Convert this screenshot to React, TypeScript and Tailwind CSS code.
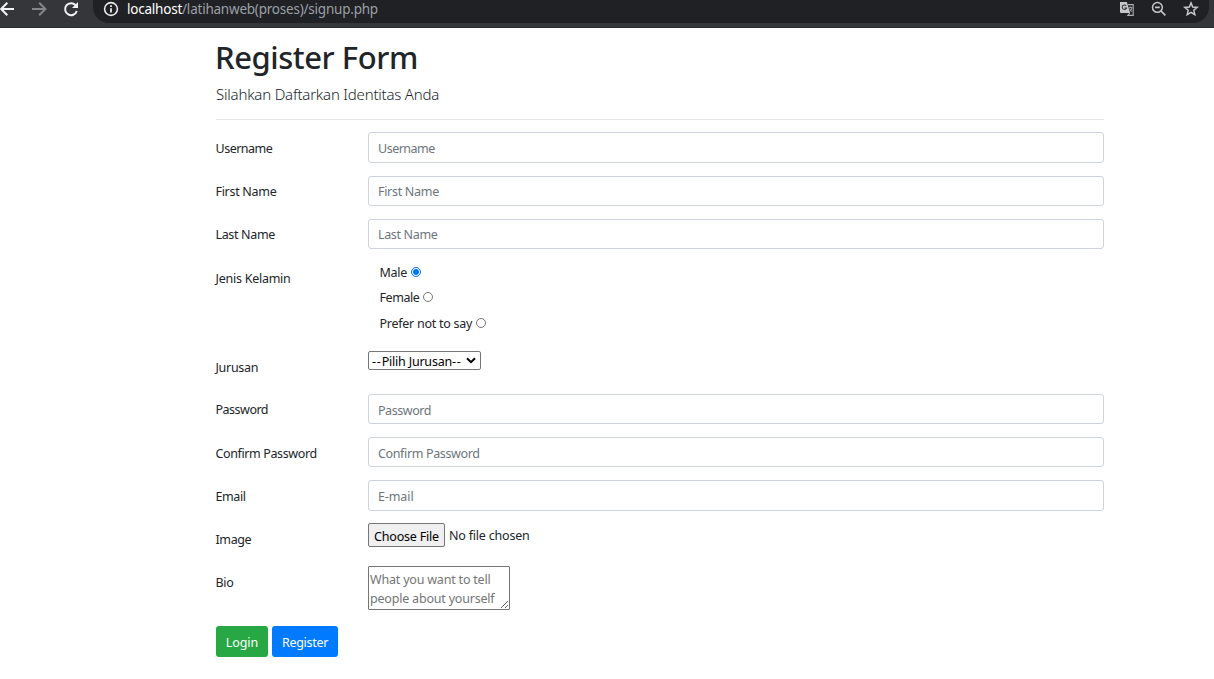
import React from "react";

const inputClass =
  "block w-full rounded-[3px] border border-[#ced4da] bg-white px-[9px] text-[12.5px] leading-[20px] text-[#495057] placeholder:text-[#6c757d] placeholder:opacity-100 outline-none";

type RowProps = {
  label: string;
  rowClass: string;
  labelClass: string;
  children: React.ReactNode;
};

function Row({ label, rowClass, labelClass, children }: RowProps) {
  return (
    <div className={`flex items-start ${rowClass}`}>
      <div className={`-ml-[0.5px] w-[152.5px] shrink-0 leading-[20px] whitespace-nowrap ${labelClass}`}>{label}</div>
      <div className="min-w-0 flex-1">{children}</div>
    </div>
  );
}

function BrowserBar() {
  return (
    <header className="flex h-[28px] items-start overflow-hidden border-b border-[#292a2d] bg-[#35363a] text-[#e8eaed]">
      <svg className="h-[18px] w-[93px] shrink-0" viewBox="0 0 93 18" fill="none" strokeWidth="2">
        <path d="M14 9H1.5M7.3 2.8 1.2 9l6.1 6.2" stroke="#f1f3f4" />
        <path d="M32 9h13M39.2 2.8 45.4 9l-6.2 6.2" stroke="#85868a" />
        <path d="M75.6 5.2A6 6 0 1 0 76.8 11" stroke="#f1f3f4" />
        <path d="M78 2v6h-6z" fill="#f1f3f4" />
      </svg>
      <div className="mr-[5px] flex h-[23px] flex-1 items-start rounded-b-[16px] bg-[#202124] pl-[10px]">
        <svg className="h-[18px] w-[16px] shrink-0" viewBox="0 0 16 18" fill="none">
          <circle cx="8" cy="9" r="6.4" stroke="#e8eaed" strokeWidth="1.6" />
          <path d="M8 8.2v4.3M8 5.3v1.6" stroke="#e8eaed" strokeWidth="1.8" />
        </svg>
        <div className="ml-[8px] text-[13.5px] leading-[18px] tracking-[-0.22px] whitespace-nowrap text-[#9aa0a6]">
          <span className="text-white">localhost</span>/latihanweb(proses)/signup.php
        </div>
        <svg className="ml-auto h-[18px] w-[90px] shrink-0" viewBox="0 0 90 18" fill="none">
          <path d="M1 2h6.8l3.4 11H2a1 1 0 0 1-1-1z" fill="#c4c6c9" />
          <path d="M8.6 4.6h5.6v10.8H8.8l2-2.4" stroke="#aeb1b5" strokeWidth="1.1" />
          <path d="M7.2 5.9A2.2 2.2 0 1 0 7.5 8H5.4" stroke="#36373a" strokeWidth="1.1" />
          <path d="M9.6 7.6h3.8M11.5 6.6v1M10.2 8.4l2.8 3.4M12.8 8c-.3 1.6-.9 2.7-1.9 3.6" stroke="#aeb1b5" strokeWidth=".9" />
          <circle cx="38.4" cy="7.4" r="4.9" stroke="#c4c6c9" strokeWidth="1.5" />
          <path d="M36 7.4h4.8M42 11l4.4 4.4" stroke="#c4c6c9" strokeWidth="1.7" />
          <path d="m72 2.9 1.7 4.1 4.5.4-3.4 2.9 1 4.4-3.8-2.3-3.8 2.3 1-4.4-3.4-2.9 4.5-.4z" stroke="#c4c6c9" strokeWidth="1.5" />
        </svg>
      </div>
    </header>
  );
}

export default function App() {
  return (
    <div className="h-[679px] overflow-hidden bg-white font-['Noto_Sans','Open_Sans',sans-serif] text-[12.5px] text-[#212529]">
      <BrowserBar />
      <main className="ml-[216px] w-[888px]">
        <h1 className="-ml-px pt-[10px] text-[31px] leading-[39px] font-medium tracking-[-0.45px] whitespace-nowrap">Register Form</h1>
        <p className="mt-[5px] text-[15px] leading-[24px] font-light tracking-[-0.2px] whitespace-nowrap">
          Silahkan Daftarkan Identitas Anda
        </p>
        <hr className="mt-[13px] mb-[12px] border-t border-[#e5e5e5]" />

        <form onSubmit={(e) => e.preventDefault()}>
          <Row label="Username" rowClass="h-[44px]" labelClass="pt-[7px] tracking-[-0.5px]">
            <input placeholder="Username" className={`h-[31px] pt-[2px] tracking-[-0.5px] ${inputClass}`} />
          </Row>
          <Row label="First Name" rowClass="h-[43px]" labelClass="pt-[6px] tracking-[-0.3px]">
            <input placeholder="First Name" className={`h-[30px] pt-0 tracking-[-0.3px] ${inputClass}`} />
          </Row>
          <Row label="Last Name" rowClass="h-[43px]" labelClass="pt-[6px] tracking-[-0.35px]">
            <input placeholder="Last Name" className={`h-[30px] pt-0 tracking-[-0.35px] ${inputClass}`} />
          </Row>

          <Row label="Jenis Kelamin" rowClass="h-[89px]" labelClass="pt-[7px] tracking-[-0.25px]">
            <div className="-mt-[2px] pl-[11.5px] leading-[20px]">
              <label className="flex h-[25px] items-center gap-[4px] tracking-[-0.3px] whitespace-nowrap">
                Male
                <input type="radio" name="gender" defaultChecked className="mt-[-2px] h-[10px] w-[10px]" />
              </label>
              <label className="flex h-[26px] items-center gap-[3.5px] tracking-[-0.45px] whitespace-nowrap">
                Female
                <input type="radio" name="gender" className="mt-[-2px] h-[10px] w-[10px]" />
              </label>
              <label className="flex h-[25px] items-center gap-[3.5px] tracking-[-0.26px] whitespace-nowrap">
                Prefer not to say
                <input type="radio" name="gender" className="mt-[-2px] h-[10px] w-[10px]" />
              </label>
            </div>
          </Row>

          <Row label="Jurusan" rowClass="h-[43px]" labelClass="pt-[7px] tracking-[-0.3px]">
            <button
              type="button"
              className="flex h-[19px] w-[113px] items-center justify-between rounded-[2px] border border-[#767676] bg-white pr-[4px] pl-[3px] leading-[17px] whitespace-nowrap text-black"
            >
              <span className="pt-[2px]">
                <span className="tracking-[0.8px]">--</span>
                <span className="tracking-[-0.2px]">Pilih Jurusan</span>
                <span className="tracking-[0.8px]">--</span>
              </span>
              <svg className="h-[7px] w-[10px] shrink-0" viewBox="0 0 10 7" fill="none">
                <path d="m1 1.2 4 4 4-4" stroke="#000" strokeWidth="2" />
              </svg>
            </button>
          </Row>

          <Row label="Password" rowClass="h-[43px]" labelClass="pt-[6px] tracking-[-0.5px]">
            <input type="password" placeholder="Password" className={`h-[30px] pt-[2px] tracking-[-0.45px] ${inputClass}`} />
          </Row>
          <Row label="Confirm Password" rowClass="h-[43px]" labelClass="pt-[7px] tracking-[-0.38px]">
            <input type="password" placeholder="Confirm Password" className={`h-[30px] pt-[2px] tracking-[-0.36px] ${inputClass}`} />
          </Row>
          <Row label="Email" rowClass="h-[43px]" labelClass="pt-[7px] tracking-[-0.4px]">
            <input placeholder="E-mail" className={`h-[31px] pt-[2px] tracking-[-0.1px] ${inputClass}`} />
          </Row>

          <Row label="Image" rowClass="h-[43px]" labelClass="pt-[7px] tracking-[-0.4px]">
            <div className="flex items-start">
              <button
                type="button"
                className="h-[24px] w-[77px] rounded-[2px] border border-[#767676] bg-[#efefef] pt-[3px] text-center leading-[20px] tracking-[-0.2px] whitespace-nowrap text-black"
              >
                Choose File
              </button>
              <span className="ml-[4px] pt-[3px] leading-[20px] tracking-[-0.2px] whitespace-nowrap">No file chosen</span>
            </div>
          </Row>

          <Row label="Bio" rowClass="h-[60px]" labelClass="pt-[7px] tracking-[-0.3px]">
            <textarea
              placeholder={"What you want to tell\npeople about yourself"}
              className="block h-[44px] w-[142px] resize overflow-hidden rounded-[1px] border border-[#767676] bg-white px-[1px] pt-[3px] leading-[19px] tracking-[-0.2px] whitespace-pre outline-none placeholder:text-[#757575] placeholder:opacity-100"
            />
          </Row>

          <div className="flex gap-[4px] text-white">
            <button type="button" className="h-[31px] w-[52px] rounded-[3px] bg-[#28a745] pt-[2px] text-center leading-[20px] tracking-[-0.1px]">
              Login
            </button>
            <button type="button" className="h-[31px] w-[66px] rounded-[3px] bg-[#007bff] pt-[2px] text-center leading-[20px] tracking-[-0.3px]">
              Register
            </button>
          </div>
        </form>
      </main>
    </div>
  );
}
